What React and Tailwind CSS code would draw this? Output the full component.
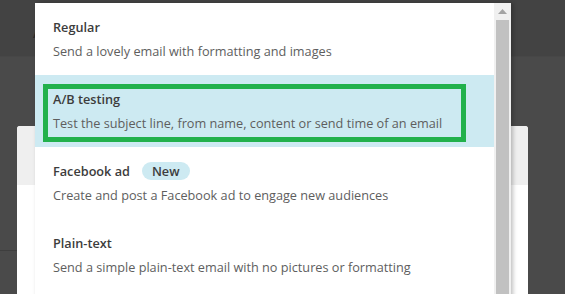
import React from 'react';

const items = [
  { id: 'regular', title: 'Regular', desc: 'Send a lovely email with formatting and images' },
  { id: 'ab', title: 'A/B testing', desc: 'Test the subject line, from name, content or send time of an email', active: true },
  { id: 'fb', title: 'Facebook ad', desc: 'Create and post a Facebook ad to engage new audiences', badge: 'New' },
  { id: 'plain', title: 'Plain-text', desc: 'Send a simple plain-text email with no pictures or formatting' },
];

const App = () => {
  return (
    <div
      className="relative w-[565px] h-[294px] overflow-hidden bg-[#4a4a4a]"
      style={{ fontFamily: '"Open Sans", "Liberation Sans", sans-serif' }}
    >
      {/* Page behind the overlay */}
      <div className="h-[57px] bg-[#434343] border-b border-[#474747] pl-[33px] pt-[20px]">
        <span className="text-[13px] font-semibold text-[#2a2a2a]">A</span>
      </div>
      <div className="flex">
        <div className="w-[17px] shrink-0">
          <div className="h-[194px] border-b border-[#3e3e3e]" />
        </div>
        <div className="mt-[69px] w-[511px] h-[200px] rounded-t-[3px] bg-white">
          <div className="h-[59px] bg-[#efefef] rounded-t-[3px]" />
        </div>
      </div>

      {/* Dropdown menu */}
      <div className="absolute left-[35px] top-[3px] flex shadow-[2px_0_4px_rgba(0,0,0,0.25)] rounded-tl-[5px]">
        <div className="w-[459px] bg-white rounded-tl-[5px]">
          {items.map((item) => (
            <div
              key={item.id}
              className={`relative h-[72px] pl-[18px] pt-[15px] flex flex-col gap-[6px] ${
                item.active ? 'bg-[#cdeaf2]' : 'bg-white'
              }`}
            >
              <div className="flex items-center gap-[12px] h-[18px]">
                <span className="text-[12.7px] leading-[18px] font-semibold text-[#3c3c3c]">{item.title}</span>
                {item.badge && (
                  <span className="h-[18px] px-[10px] rounded-full bg-[#cdeaf2] text-[12.7px] leading-[18px] font-semibold text-[#3c3c3c]">
                    {item.badge}
                  </span>
                )}
              </div>
              <p className="text-[12.7px] leading-[18px] text-[#5e5e5e] whitespace-nowrap">{item.desc}</p>
              {item.active && (
                <div className="absolute left-[8px] top-[9px] w-[423px] h-[58px] border-[5px] border-[#22b14c]" />
              )}
            </div>
          ))}
        </div>
        {/* Scrollbar */}
        <div className="w-[17px] bg-[#f0f0f0] flex flex-col items-center">
          <div className="h-[17px] flex items-center justify-center">
            <svg width="9" height="5" viewBox="0 0 9 5">
              <path d="M4.5 0 L9 5 L0 5 Z" fill="#a3a3a3" />
            </svg>
          </div>
          <div className="w-[13px] h-[280px] bg-[#c1c1c1]" />
        </div>
      </div>
    </div>
  );
};

export default App;
